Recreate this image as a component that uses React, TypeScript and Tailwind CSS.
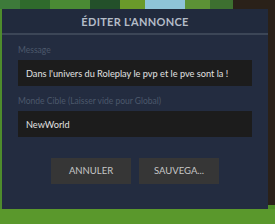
import React, { useState } from 'react';

const font = { fontFamily: 'Lato, "Open Sans", sans-serif' };

export default function App() {
    const [message, setMessage] = useState("Dans l'univers du Roleplay le pvp et le pve sont la !");
    const [world, setWorld] = useState('NewWorld');

    return (
        <div className="w-[275px] h-[224px] overflow-hidden flex flex-col bg-[#5a982c]" style={font}>
            {/* game scene behind the dialog */}
            <div className="h-[9px] flex shrink-0">
                <div className="w-[20px] bg-[#3d7a3a]" />
                <div className="w-[30px] bg-[#2f6a2c]" />
                <div className="w-[40px] bg-[#4a8a34]" />
                <div className="w-[30px] bg-[#23502a]" />
                <div className="w-[25px] bg-[#6a9a2a]" />
                <div className="w-[40px] bg-[#8ec4d8]" />
                <div className="w-[25px] bg-[#5c9236]" />
                <div className="w-[23px] bg-[#3d7030]" />
                <div className="flex-1 bg-[#2a2119]" />
            </div>
            <div className="flex h-[200px] shrink-0">
                <div className="w-[2px] bg-[#4e8c2c]" />
                <div className="w-[266px] bg-[#232c40] flex flex-col">
                    <div className="h-[24px] bg-[#212a3d] flex items-center justify-center">
                        <h2 className="text-[11px] font-bold tracking-[0.3px] text-[#b4bcc8] leading-none">ÉDITER L'ANNONCE</h2>
                    </div>
                    <div className="h-[2px] bg-[#3c4657]" />
                    <div className="px-[16px] pt-[10px] flex flex-col">
                        <label className="text-[8.5px] leading-[11px] text-[#4c586b] mb-[4px]">Message</label>
                        <input
                            value={message}
                            onChange={e => setMessage(e.target.value)}
                            className="h-[26px] w-full bg-[#1c1c1c] px-[8px] text-[9.2px] text-[#e2e2e2] outline-none"
                            style={font}
                        />
                        <label className="text-[8.5px] leading-[11px] text-[#4c586b] mt-[10px] mb-[4px]">Monde Cible (Laisser vide pour Global)</label>
                        <input
                            value={world}
                            onChange={e => setWorld(e.target.value)}
                            className="h-[26px] w-full bg-[#1c1c1c] px-[8px] text-[9.2px] text-[#e2e2e2] outline-none"
                            style={font}
                        />
                        <div className="flex justify-center gap-[8px] mt-[21px]">
                            <button className="w-[80px] h-[26px] bg-[#363636] text-[9.5px] text-[#c6c6c6]" style={font}>ANNULER</button>
                            <button className="w-[80px] h-[26px] bg-[#363636] text-[9.5px] text-[#c6c6c6]" style={font}>SAUVEGA...</button>
                        </div>
                    </div>
                </div>
                <div className="flex-1 flex flex-col">
                    <div className="h-[196px] bg-[#2a2119]" />
                    <div className="flex-1 bg-[#4f8f28]" />
                </div>
            </div>
            <div className="flex-1 bg-[#5a982c]" />
        </div>
    );
}
